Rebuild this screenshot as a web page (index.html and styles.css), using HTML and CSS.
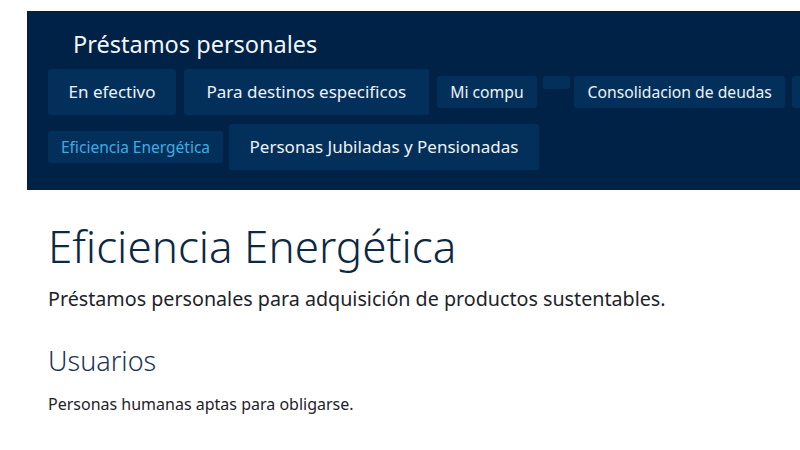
FILE: index.html
```
<!DOCTYPE html>
<html lang="es">
<head>
<meta charset="utf-8">
<title>Eficiencia Energética</title>
<link rel="stylesheet" href="styles.css">
</head>
<body>
<div class="page">
  <header class="hero">
    <h2 class="hero-title">Préstamos personales</h2>
    <nav class="tabs">
      <div class="row">
        <a class="tab big" href="#">En efectivo</a>
        <a class="tab big wide" href="#">Para destinos especificos</a>
        <a class="tab sm m6" href="#">Mi compu</a>
        <span class="tab empty"></span>
        <a class="tab sm m7" href="#">Consolidacion de deudas</a>
        <span class="tab sm more"></span>
      </div>
      <div class="row">
        <a class="tab xs active m6" href="#">Eficiencia Energética</a>
        <a class="tab big" href="#">Personas Jubiladas y Pensionadas</a>
      </div>
    </nav>
  </header>
  <main class="content">
    <h1 class="title">Eficiencia Energética</h1>
    <p class="lead">Préstamos personales para adquisición de productos sustentables.</p>
    <h3 class="section">Usuarios</h3>
    <p class="text">Personas humanas aptas para obligarse.</p>
  </main>
</div>
</body>
</html>
```
FILE: styles.css
```
html, body {
  margin: 0;
  padding: 0;
  overflow: hidden;
  background: #ffffff;
}
body {
  font-family: "Noto Sans", "Open Sans", sans-serif;
}
.page {
  padding: 11px 0 0 27px;
  width: 1000px;
}
.hero {
  background: #002246;
  padding: 17px 0 20px 21px;
  width: 900px;
}
.hero-title {
  margin: 0 0 9px 25px;
  font-size: 23.5px;
  line-height: 32px;
  font-weight: 400;
  color: #f2f5f8;
}
.tabs {
  display: flex;
  flex-direction: column;
  gap: 9px;
}
.row {
  display: flex;
  align-items: center;
}
.tab {
  display: block;
  background: #03305a;
  color: #eef2f6;
  text-decoration: none;
  border-radius: 3px;
  white-space: nowrap;
  margin-right: 8px;
}
.big {
  padding: 12px 20.5px;
  font-size: 17px;
  line-height: 22px;
}
.big.wide {
  padding: 12px 22.5px;
}
.sm {
  padding: 5px 13.5px;
  font-size: 15.7px;
  line-height: 22px;
}
.xs {
  padding: 6px 13px;
  font-size: 15.5px;
  line-height: 20px;
}
.active {
  color: #42a9e1;
}
.m6 { margin-right: 6px; }
.m7 { margin-right: 7px; }
.empty {
  width: 27px;
  height: 13px;
  align-self: flex-start;
  margin-top: 7px;
  margin-right: 4px;
}
.more {
  width: 60px;
  height: 22px;
}
.content {
  padding: 28px 0 0 21px;
}
.title {
  margin: 0;
  font-size: 44px;
  line-height: 56px;
  font-weight: 300;
  color: #0d2843;
}
.lead {
  margin: 11px 0 0;
  font-size: 19.7px;
  line-height: 28px;
  color: #1f2229;
}
.section {
  margin: 30px 0 0;
  font-size: 27px;
  line-height: 36px;
  font-weight: 300;
  color: #1d3554;
}
.text {
  margin: 14px 0 0;
  font-size: 16px;
  line-height: 22px;
  color: #1f2229;
}
```
